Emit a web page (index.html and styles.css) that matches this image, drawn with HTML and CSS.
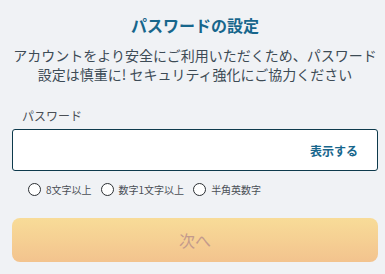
FILE: index.html
```html
<!DOCTYPE html>
<html lang="ja">
<head>
  <meta charset="UTF-8" />
  <meta name="viewport" content="width=device-width, initial-scale=1.0" />
  <title>パスワードの設定</title>
  <link rel="stylesheet" href="styles.css">
</head>
<body>
  <div class="page">
    <h1 class="title">パスワードの設定</h1>
    <p class="lead">アカウントをより安全にご利用いただくため、パスワード<br>設定は慎重に! セキュリティ強化にご協力ください</p>

    <label class="field-label" for="password">パスワード</label>
    <div class="field">
      <input id="password" class="field-input" type="password" />
      <button class="show-button" type="button">表示する</button>
    </div>

    <ul class="rules">
      <li class="rule"><span class="rule-mark"></span>8文字以上</li>
      <li class="rule"><span class="rule-mark"></span>数字1文字以上</li>
      <li class="rule"><span class="rule-mark"></span>半角英数字</li>
    </ul>

    <button class="next-button" type="button" disabled>次へ</button>
  </div>
</body>
</html>
```

FILE: styles.css
```css
body {
  margin: 0;
  padding: 0;
  background: #f0f2f5;
  font-family: "Noto Sans CJK JP", "Noto Sans", sans-serif;
  color: #3d4b55;
}

.page {
  padding: 14px 7px 0 12px;
  display: flex;
  flex-direction: column;
}

h1.title {
  margin: 0;
  font-size: 16px;
  line-height: 22px;
  font-weight: 700;
  color: #17668c;
  text-align: center;
}

p.lead {
  margin: 10px 0 0 0;
  font-size: 14px;
  line-height: 19px;
  text-align: center;
  color: #3d4b55;
}

.field-label {
  margin: 23px 0 0 10px;
  font-size: 12px;
  line-height: 18px;
  color: #4a4f55;
}

.field {
  margin-top: 4px;
  height: 42px;
  box-sizing: border-box;
  border: 1px solid #0e3a4c;
  border-radius: 3px;
  background: #fff;
  display: flex;
  align-items: center;
}

.field-input {
  flex: 1;
  min-width: 0;
  border: none;
  outline: none;
  background: transparent;
  height: 100%;
  padding: 0 10px;
  font-family: inherit;
  font-size: 14px;
}

.show-button {
  border: none;
  background: none;
  padding: 0 19px 0 8px;
  font-family: inherit;
  font-size: 12px;
  font-weight: 700;
  color: #17668c;
  cursor: pointer;
}

.rules {
  list-style: none;
  margin: 11px 0 0 0;
  padding: 0 0 0 16px;
  display: flex;
  gap: 9px;
}

.rule {
  display: flex;
  align-items: center;
  gap: 5px;
  font-size: 10px;
  line-height: 15px;
  color: #4a4f55;
}

.rule-mark {
  width: 13px;
  height: 13px;
  box-sizing: border-box;
  border: 1.3px solid #2b2f33;
  border-radius: 50%;
  background: #fff;
}

.next-button {
  margin-top: 21px;
  height: 44px;
  border: none;
  border-radius: 8px;
  background: linear-gradient(180deg, #f8dc98 0%, #f3c38e 100%);
  font-family: inherit;
  font-size: 16px;
  color: #c39a8c;
}
```
